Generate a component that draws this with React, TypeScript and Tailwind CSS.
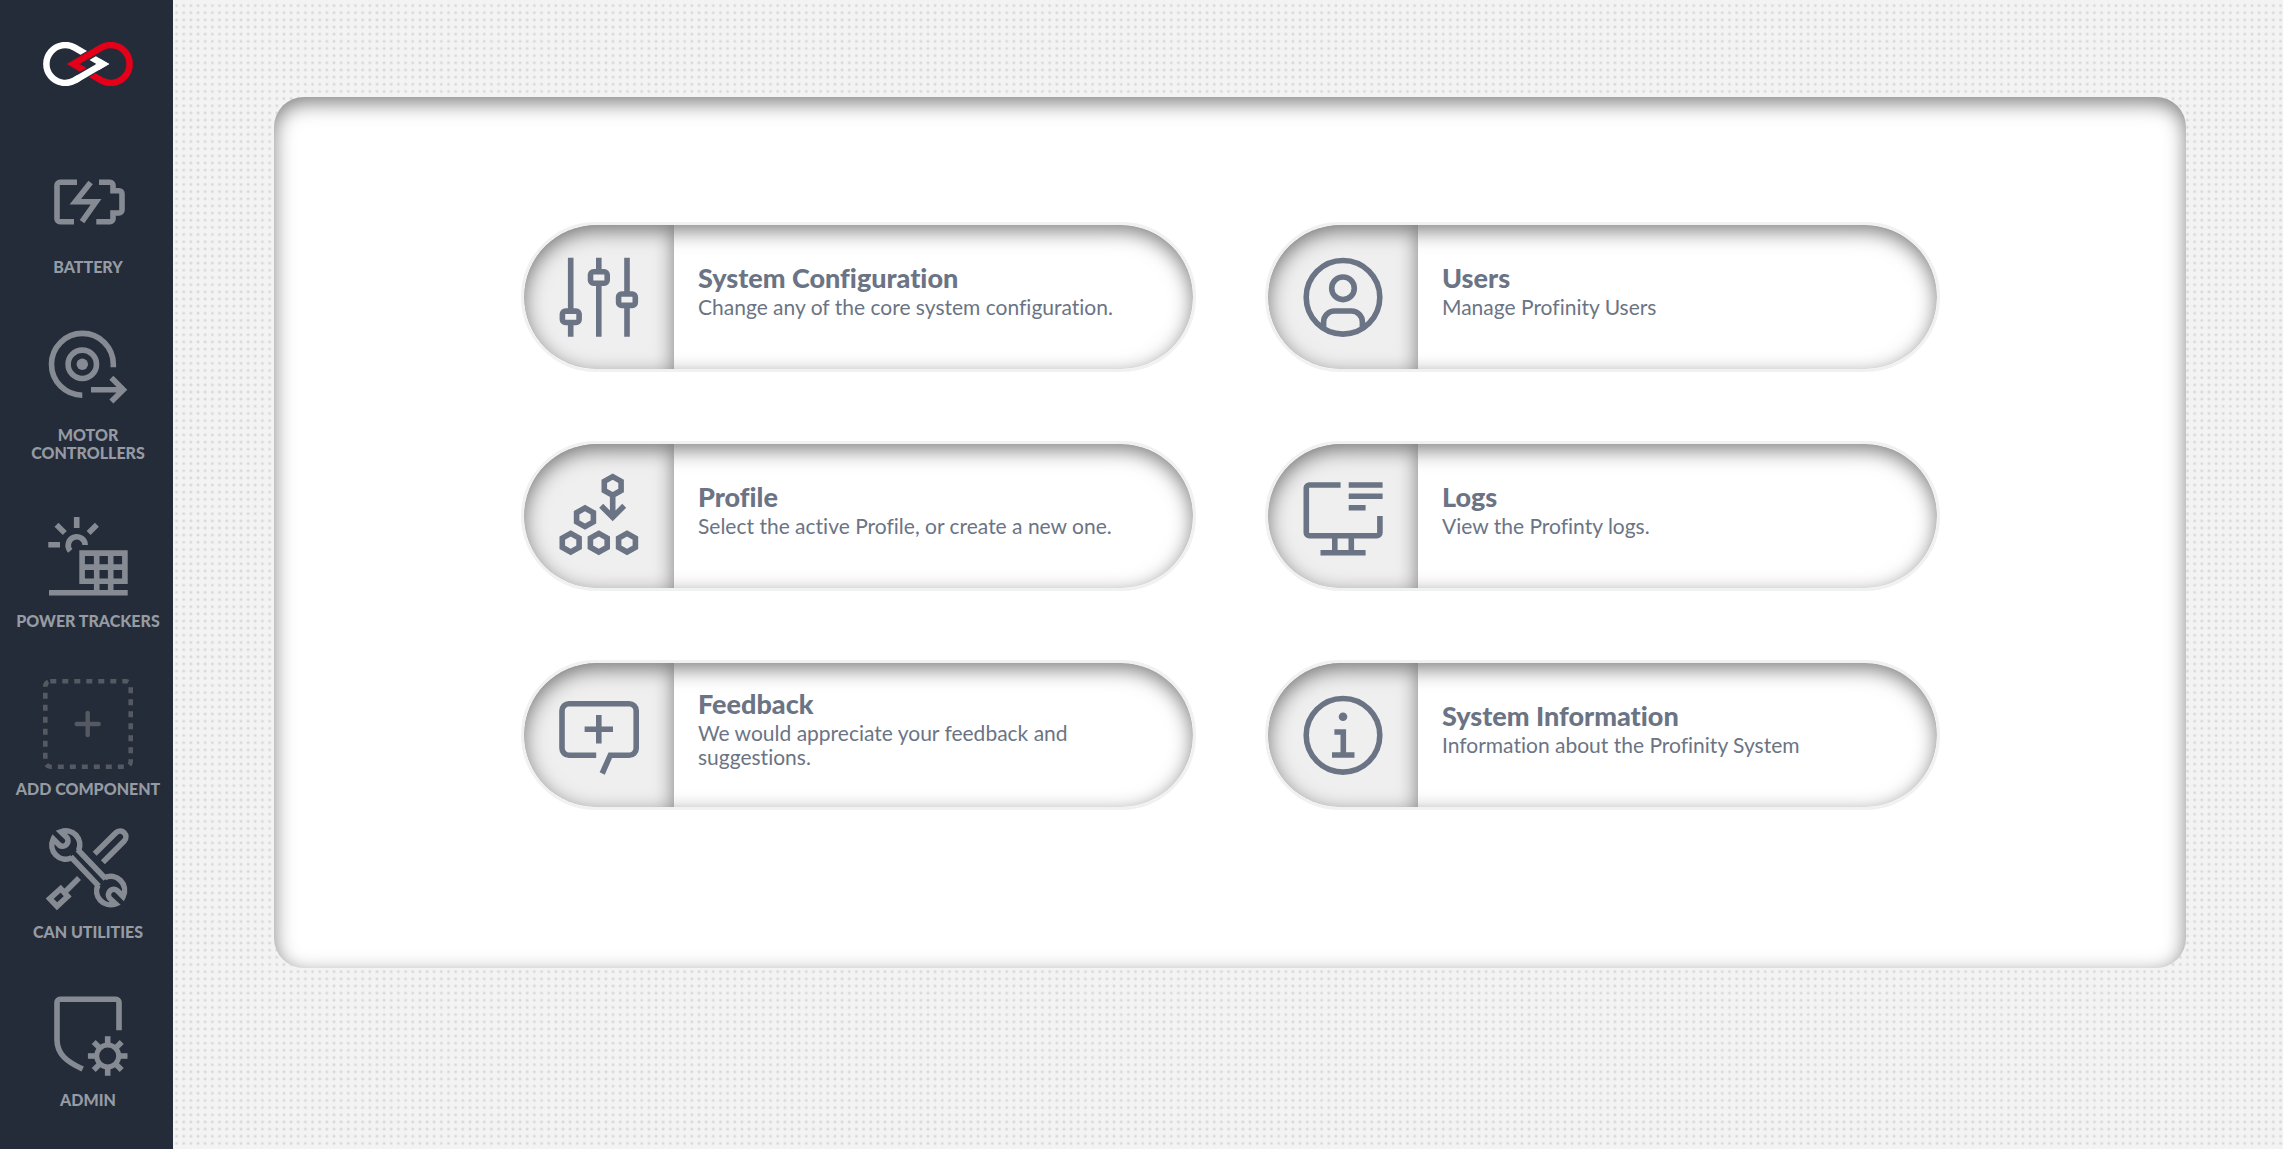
import type { ReactNode } from "react";

const INSET = "shadow-[inset_0_6px_20px_rgba(0,0,0,0.5)]";

function Icon({ children }: { children: ReactNode }) {
  return (
    <svg
      viewBox="0 0 90 90"
      className="size-[90px] shrink-0"
      fill="none"
      stroke="currentColor"
      strokeWidth="5.6"
      strokeMiterlimit="10"
      aria-hidden="true"
    >
      {children}
    </svg>
  );
}

function Logo() {
  return (
    <svg viewBox="0 0 90 44" className="h-11 w-[90px]" fill="none" strokeWidth="6.5" strokeMiterlimit="10" aria-hidden="true">
      <path stroke="#fff" d="M59.8 22 31.75 5.65A18.9 18.9 0 1 0 31.75 38.35Z" />
      <path stroke="#242c3a" strokeWidth="9" d="M36 18.8 54 8.3" />
      <path stroke="#e50019" d="M30.2 22 58.25 5.65A18.9 18.9 0 1 1 58.25 38.35Z" />
      <path stroke="#242c3a" strokeWidth="9" d="M36 35.7 54 25.2" />
      <path stroke="#fff" d="M31.75 38.35 59.8 22 55 19.2" />
    </svg>
  );
}

const battery = (
  <Icon>
    <path d="M34 25.3H17a3 3 0 0 0-3 3V61.7a3 3 0 0 0 3 3H31" />
    <path d="M56 25.3H67a3 3 0 0 1 3 3V33.7H76a3 3 0 0 1 3 3V53a3 3 0 0 1-3 3H70V61.7a3 3 0 0 1-3 3H53.3" />
    <path d="M47.6 25.4 32.3 44.8H53L39 64.6" />
  </Icon>
);

const motor = (
  <Icon>
    <path d="M70.3 42.3V39.3A30.9 30.9 0 1 0 39.3 70.2" />
    <circle cx="39.3" cy="39.3" r="14.2" />
    <circle cx="39.3" cy="39.3" r="5.7" fill="currentColor" stroke="none" />
    <path d="M48 64.7H80M68.4 52.8 80.3 64.7 68.4 76.6" />
  </Icon>
);

const solar = (
  <Icon>
    <path d="M6 81.7H84.7M39.1 42.1H81.9V70.2H39.1ZM39.1 56.1H81.9M53.7 42V81M67.7 42V81" />
    <path d="M42.2 34A8.5 8.5 0 1 0 27.3 39.9" />
    <path d="M33.7 6V17M5.3 33.7H17M13.5 13.7 21.8 22M53.9 13.7 45.6 22" />
  </Icon>
);

const add = (
  <Icon>
    <g stroke="#555a62">
      <rect x="2.3" y="2.3" width="85.4" height="85.4" rx="5" strokeWidth="4.6" strokeDasharray="6 6" />
      <path d="M33.7 45H55.7M44.7 34V56" strokeWidth="4.4" strokeLinecap="round" />
    </g>
  </Icon>
);

const wrenchHead = "M28.8 35.8A13.9 13.9 0 0 1 10.3 17.1L16.2 23A5.4 5.4 0 0 0 23.8 15.4L17.9 9.8A13.9 13.9 0 0 1 35.5 28.6";

const tools = (
  <Icon>
    <path d={wrenchHead} />
    <path d={wrenchHead} transform="rotate(180 45.2 45.8)" />
    <path d="M34.6 27.5 62.6 56.8M27.8 34.8 55.8 64.1" />
    <path d="M51.7 31.8 72.9 10.8A5.8 5.8 0 0 1 81.2 19L59.9 40.2" />
    <path d="M36 56 22.5 69.5M17.7 66.7 24.7 74.3 14 84.3 6.7 76.7Z" />
  </Icon>
);

const admin = (
  <Icon>
    <path d="M76 40.3V12.3a3 3 0 0 0-3-3H17a3 3 0 0 0-3 3V50C14 64 24 72 39.7 79" />
    <circle cx="64.7" cy="66" r="11" strokeWidth="5" />
    <g strokeWidth="5.6">
      {[0, 45, 90, 135, 180, 225, 270, 315].map((a) => (
        <path key={a} d="M64.7 54V46.2" transform={`rotate(${a} 64.7 66)`} />
      ))}
    </g>
  </Icon>
);

const sliders = (
  <Icon>
    <path d="M16.7 5.7V59M16.7 70.5V84.7M44.8 5.7V19.8M44.8 31.2V84.7M73 5.7V42M73 53.5V84.7" />
    <rect x="8.4" y="59.1" width="16.7" height="11.4" rx="3" />
    <rect x="36.5" y="19.8" width="16.7" height="11.4" rx="3" />
    <rect x="64.6" y="42" width="16.7" height="11.4" rx="3" />
  </Icon>
);

const hex = "m0-9.3 8.4 4.7v9.2l-8.4 4.7-8.4-4.7v-9.2z";

const profile = (
  <Icon>
    <path d={`M58.7 14.9${hex}`} />
    <path d={`M31 46.3${hex}`} />
    <path d={`M16.7 71.7${hex}`} />
    <path d={`M44.8 71.7${hex}`} />
    <path d={`M73 71.7${hex}`} />
    <path d="M58.7 26V46M47.2 34.8 58.7 46.3 70.2 34.8" />
  </Icon>
);

const feedback = (
  <Icon>
    <path d="M42.2 65.2H15a7 7 0 0 1-7-7V20.8a7 7 0 0 1 7-7H75.2a7 7 0 0 1 7 7V58.2a7 7 0 0 1-7 7H56.3L48.2 83.5" />
    <path d="M44.8 25V53.6M30.6 39.3H59" />
  </Icon>
);

const user = (
  <Icon>
    <circle cx="45" cy="45.3" r="36.8" />
    <circle cx="45" cy="36.3" r="11.3" />
    <path d="M25.6 75V70a11 11 0 0 1 11-11H53.4a11 11 0 0 1 11 11V75" />
  </Icon>
);

const logs = (
  <Icon>
    <path d="M42.6 14H11.3a3 3 0 0 0-3 3V61.7a3 3 0 0 0 3 3H78.9a3 3 0 0 0 3-3V45" />
    <path d="M50.7 14H84.6M50.7 25.3H84.6M50.7 36.7H67.6M36.8 64.7V81M53.3 64.7V81M22.5 81.7H67.6" />
  </Icon>
);

const info = (
  <Icon>
    <circle cx="45" cy="45.3" r="36.8" />
    <circle cx="45" cy="26.7" r="4.3" fill="currentColor" stroke="none" />
    <path d="M36.4 42H45.3V65M34 65H56.5" />
  </Icon>
);

const cards = [
  { title: "System Configuration", text: "Change any of the core system configuration.", icon: sliders },
  { title: "Users", text: "Manage Profinity Users", icon: user },
  { title: "Profile", text: "Select the active Profile, or create a new one.", icon: profile },
  { title: "Logs", text: "View the Profinty logs.", icon: logs },
  { title: "Feedback", text: "We would appreciate your feedback and suggestions.", icon: feedback },
  { title: "System Information", text: "Information about the Profinity System", icon: info },
];

const itemClass = "flex w-full flex-col items-center gap-[11px] text-[#868b93]";
const labelClass = "px-2 text-center text-[16px] leading-[18px] font-black text-[#969ba3] uppercase";

function NavItem({ label, icon }: { label: string; icon: ReactNode }) {
  return (
    <a href="#" className={itemClass}>
      {icon}
      <span className={labelClass}>{label}</span>
    </a>
  );
}

export default function App() {
  return (
    <div className="flex min-h-screen font-['Lato',sans-serif] [font-variant-ligatures:none]">
      <nav className="flex w-[173px] shrink-0 flex-col items-center gap-[49px] bg-[#242c3a] pt-[42px] pb-6 pl-[3px]">
        <a href="#" aria-label="Home" className="mb-[22px]">
          <Logo />
        </a>
        <NavItem label="Battery" icon={battery} />
        <NavItem label="Motor Controllers" icon={motor} />
        <NavItem label="Power Trackers" icon={solar} />
        <div className="flex w-full flex-col gap-6">
          <button type="button" className={itemClass}>
            {add}
            <span className={labelClass}>Add Component</span>
          </button>
          <NavItem label="CAN Utilities" icon={tools} />
        </div>
        <NavItem label="Admin" icon={admin} />
      </nav>

      <main className="flex-1 bg-[#f3f3f3] bg-[radial-gradient(circle,#cfcfcf_0,#dedede_1px,#f3f3f3_2px)] bg-[length:calc(43px/6)_calc(43px/6)] bg-[position:0_2px] pt-[97px] pr-[97px] pb-24 pl-[101px]">
        <section className={`grid grid-cols-2 gap-[69px] rounded-[30px] bg-white pt-[125px] pr-[246px] pb-[158px] pl-[247px] ${INSET}`}>
          {cards.map((card) => (
            <a
              key={card.title}
              href="#"
              className={`flex h-[150px] overflow-hidden rounded-full border-[3px] border-[#f0f1f1] text-[#6b7484] ${INSET}`}
            >
              <span className={`flex w-[150px] shrink-0 items-center justify-center rounded-l-[72px] bg-[#efefef] ${INSET}`}>
                {card.icon}
              </span>
              <span className="flex flex-1 flex-col justify-center pr-12 pb-[14px] pl-6">
                <span className="text-[27px] leading-[34px] font-black">{card.title}</span>
                <span className="text-[21px] leading-6">{card.text}</span>
              </span>
            </a>
          ))}
        </section>
      </main>
    </div>
  );
}
